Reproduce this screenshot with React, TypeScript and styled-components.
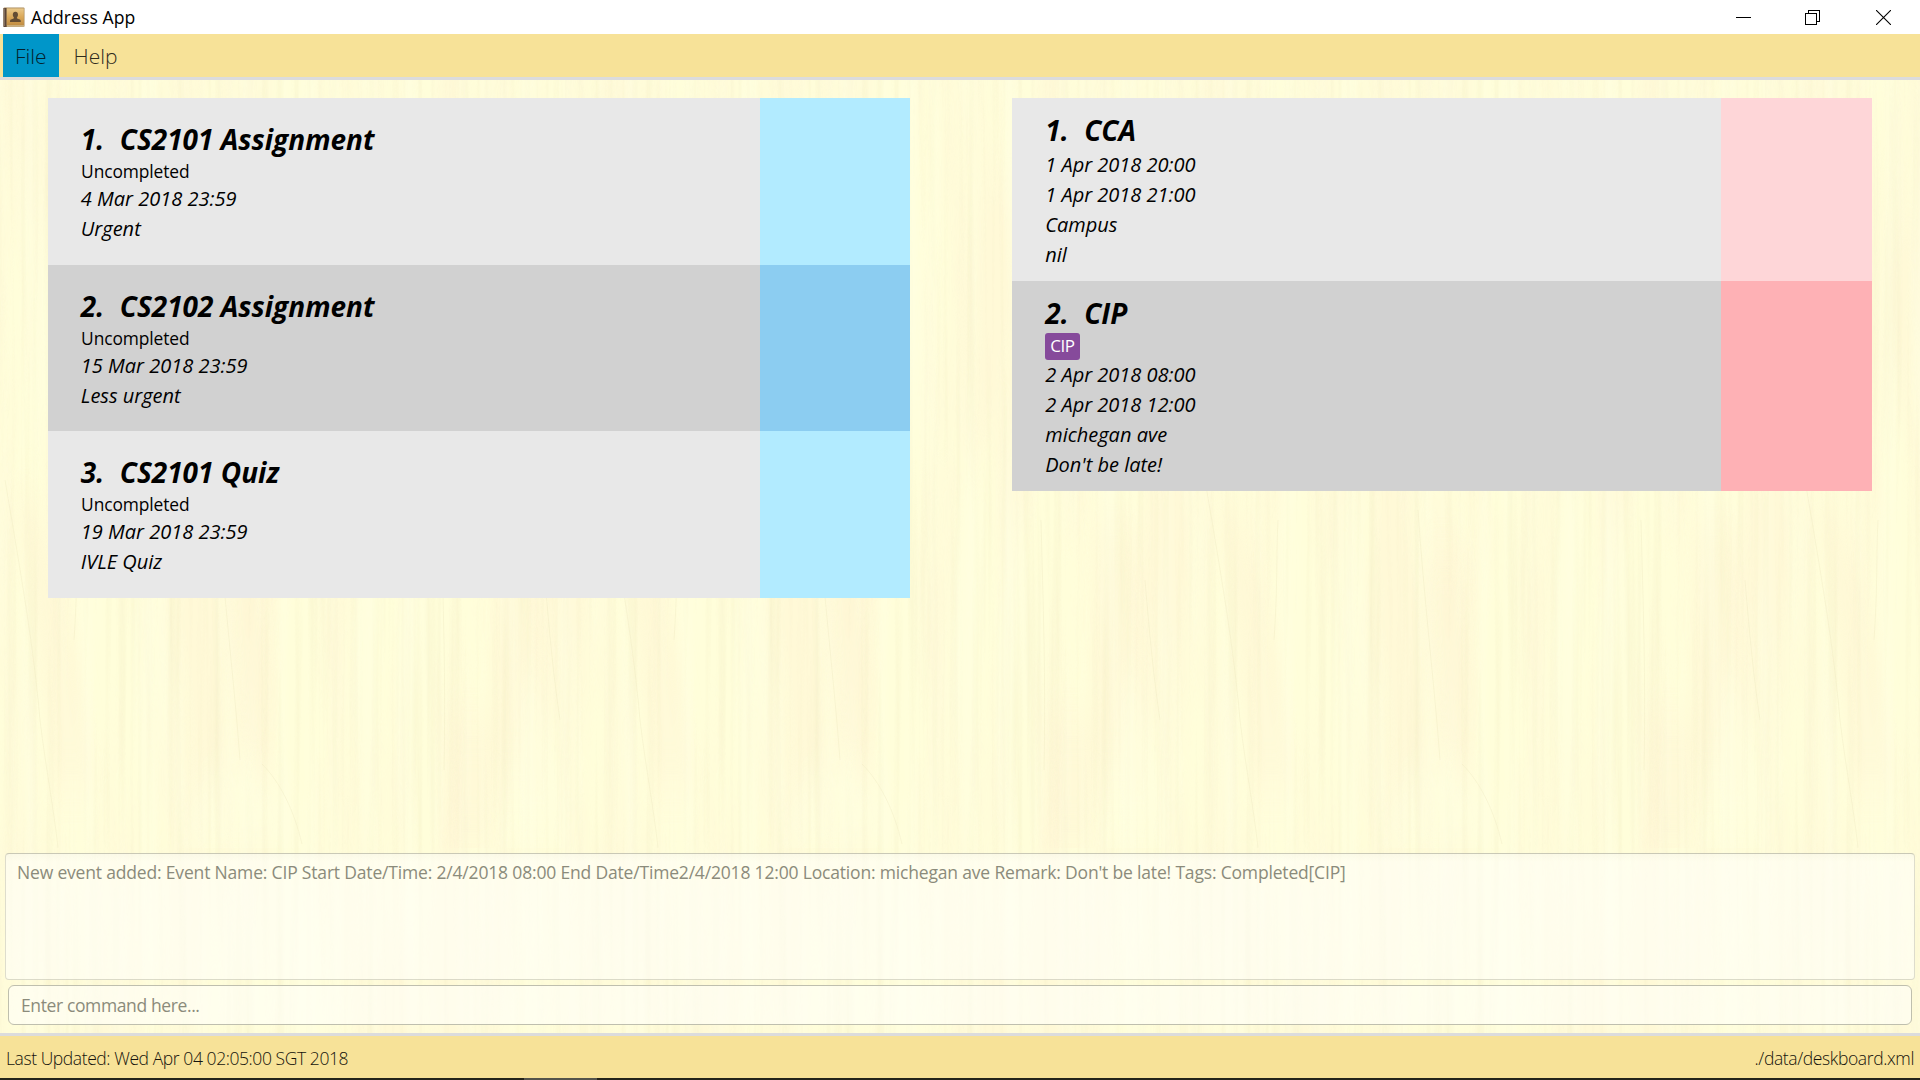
import React from "react";
import styled, { createGlobalStyle } from "styled-components";

const GlobalStyle = createGlobalStyle`
  * { box-sizing: border-box; }
  body {
    margin: 0;
    background: #fffddb;
    font-family: "Open Sans", "Noto Sans", sans-serif;
    color: #000;
  }
`;

const Window = styled.div`
  display: flex;
  flex-direction: column;
  width: 1920px;
  height: 1080px;
  overflow: hidden;
`;

const TitleBar = styled.header`
  display: flex;
  flex: 0 0 34px;
  align-items: center;
  padding-left: 3px;
  background: #fff;
`;

const WindowTitle = styled.h1`
  flex: 1;
  margin: 0 0 0 6px;
  font-size: 17.6px;
  font-weight: 400;
  line-height: 34px;
  letter-spacing: 0.05px;
`;

const WindowButtons = styled.div`
  display: flex;
  align-self: stretch;
`;

const WindowButton = styled.button<{ $width: number }>`
  display: flex;
  align-items: center;
  justify-content: center;
  width: ${(p) => p.$width}px;
  padding: 0;
  border: 0;
  background: none;
`;

const MenuBar = styled.nav`
  display: flex;
  flex: 0 0 46px;
  padding-left: 3px;
  background: #f7e298;
  border-bottom: 3px solid #dcdcdc;
`;

const MenuItem = styled.div<{ $active?: boolean }>`
  height: 43px;
  padding: 0 ${(p) => (p.$active ? "12px 0 12px" : "13px 0 15px")};
  background: ${(p) => (p.$active ? "#0096c9" : "transparent")};
  color: ${(p) => (p.$active ? "#04212d" : "#2f2b1d")};
  font-size: 21px;
  font-weight: 300;
  line-height: 45px;
`;

const Body = styled.main`
  position: relative;
  display: flex;
  flex: 1;
  flex-direction: column;
  padding: 18px 5px 8px;
  isolation: isolate;
`;

const WoodLayer = styled.svg`
  position: absolute;
  inset: 0;
  z-index: -1;
`;

const Boards = styled.div`
  display: flex;
  flex: 1;
  align-items: flex-start;
  justify-content: space-between;
  padding: 0 43px;
`;

const CardList = styled.section<{ $width: number; $height: number }>`
  display: flex;
  flex-direction: column;
  width: ${(p) => p.$width}px;
  height: ${(p) => p.$height}px;
`;

const Card = styled.article<{ $shade: "light" | "dark"; $grow: number }>`
  display: flex;
  flex: ${(p) => p.$grow} 0 0;
  background: ${(p) => (p.$shade === "light" ? "#e8e8e8" : "#d1d1d1")};
`;

const CardBody = styled.div<{ $top: number }>`
  flex: 1;
  padding: ${(p) => p.$top}px 0 0 32.8px;
`;

const CardMark = styled.div<{ $color: string }>`
  width: 150.7px;
  background: ${(p) => p.$color};
`;

const CardTitle = styled.h2`
  display: flex;
  margin: 0;
  font-size: 28px;
  font-style: italic;
  font-weight: 700;
  line-height: 39px;
`;

const CardIndex = styled.span`
  width: 39px;
`;

const CardStatus = styled.div`
  padding-left: 0.3px;
  font-size: 17.4px;
  line-height: 25px;
  letter-spacing: -0.12px;
`;

const CardLine = styled.div`
  font-size: 20px;
  font-style: italic;
  line-height: 30px;
`;

const TagRow = styled.div`
  display: flex;
  height: 27px;
`;

const Tag = styled.span`
  height: 27px;
  padding: 0 5px;
  border-radius: 3px;
  background: #864a9b;
  color: #fff;
  font-size: 17px;
  line-height: 26px;
  letter-spacing: -0.4px;
`;

const ResultPanel = styled.div`
  height: 127px;
  padding: 6px 11px;
  border: 1px solid rgba(120, 120, 100, 0.24);
  border-top-color: rgba(120, 120, 100, 0.4);
  border-radius: 4px;
  background: linear-gradient(rgba(248, 248, 240, 0.6), rgba(255, 255, 250, 0.6) 8px);
  color: #8b8b7b;
  font-size: 17.5px;
  line-height: 24px;
  letter-spacing: -0.177px;
  white-space: nowrap;
`;

const CommandBox = styled.div`
  height: 40px;
  margin: 5px 3px 0;
  padding: 0 12px;
  border: 1px solid #bfbfae;
  border-radius: 6px;
  background: rgba(255, 255, 250, 0.6);
  color: #8b8b7b;
  font-size: 17.5px;
  line-height: 39px;
  letter-spacing: -0.38px;
`;

const StatusBar = styled.footer`
  display: flex;
  flex: 0 0 45px;
  justify-content: space-between;
  min-height: 0;
  padding: 2px 6px 0;
  border-top: 3px solid #dcdcdc;
  background: #f7e298;
  color: #15130c;
  font-size: 17.5px;
  font-weight: 350;
  line-height: 40px;
`;

const StatusText = styled.span<{ $spacing: number }>`
  letter-spacing: ${(p) => p.$spacing}px;
`;

const TaskbarEdge = styled.div`
  display: flex;
  flex: 0 0 2px;
  padding-left: 524px;
  background: #24241a;
`;

const TaskbarActive = styled.div`
  width: 73px;
  background: #54544b;
`;

function AddressBookIcon() {
  return (
    <svg width="22" height="21" viewBox="0 0 22 21">
      <defs>
        <linearGradient id="cover" x1="0" y1="0" x2="0" y2="1">
          <stop offset="0" stopColor="#e9c88a" />
          <stop offset="0.5" stopColor="#dba95a" />
          <stop offset="1" stopColor="#c08c42" />
        </linearGradient>
      </defs>
      <rect x="0.5" y="0.5" width="21" height="19.5" rx="1" fill="#a98a5a" />
      <rect x="0.5" y="1" width="3" height="19" fill="#5b4537" />
      <rect x="1" y="1.5" width="0.8" height="17.5" fill="#8b7768" />
      <rect x="3.8" y="1.4" width="17" height="17" fill="url(#cover)" />
      <path d="M4 19h17" stroke="#efe0bd" strokeWidth="0.8" />
      <path
        d="M12.400 4.800c1.700 0 2.600 1.200 2.600 2.900 0 1.200-.5 2.100-1.100 2.700v.9c.8.7 3.300 1 3.700 1.900.2.500.2 1.200.2 1.900H7c0-.7 0-1.400.2-1.900.4-.9 2.900-1.200 3.700-1.900v-.9c-.6-.6-1.100-1.500-1.100-2.700C9.800 6 10.700 4.800 12.400 4.800z"
        fill="#634c33"
      />
    </svg>
  );
}

function WoodGrain() {
  return (
    <WoodLayer width="1920" height="953" aria-hidden>
      <defs>
        <filter id="bands" x="0" y="0" width="100%" height="100%" colorInterpolationFilters="sRGB">
          <feTurbulence type="fractalNoise" baseFrequency="0.018 0.003" numOctaves={4} seed={7} stitchTiles="stitch" />
          <feColorMatrix values="0 0 0 0 0.995  0 0 0 0 0.945  0 0 0 0 0.825  3 0 0 0 -1.15" />
        </filter>
        <filter id="fibres" x="0" y="0" width="100%" height="100%" colorInterpolationFilters="sRGB">
          <feTurbulence type="fractalNoise" baseFrequency="0.13 0.003" numOctaves={3} seed={21} stitchTiles="stitch" />
          <feColorMatrix values="0 0 0 0 0.93  0 0 0 0 0.9  0 0 0 0 0.73  1.6 0 0 0 -0.74" />
        </filter>
        <filter id="highlights" x="0" y="0" width="100%" height="100%" colorInterpolationFilters="sRGB">
          <feTurbulence type="fractalNoise" baseFrequency="0.05 0.003" numOctaves={2} seed={4} stitchTiles="stitch" />
          <feColorMatrix values="0 0 0 0 1  0 0 0 0 1  0 0 0 0 0.9  0 2.4 0 0 -1.1" />
        </filter>
        <filter id="soft" x="-30%" y="-30%" width="160%" height="160%">
          <feGaussianBlur stdDeviation="6 22" />
        </filter>
        <pattern id="plank" width="600" height="768" patternUnits="userSpaceOnUse">
          <rect width="600" height="768" fill="#fffeda" />
          <rect width="600" height="768" filter="url(#bands)" opacity="0.36" />
          <g fill="#fef3d2" opacity="0.42" filter="url(#soft)">
            <path d="M14 420C32 520 46 600 52 710H96C88 620 72 520 34 420z" />
            <path d="M222 470C228 560 236 610 242 700H268C276 620 272 540 262 470z" />
            <path d="M494 440C488 560 498 640 486 700H540C546 610 540 520 530 440z" />
            <path d="M452 640H492V768H446z" />
          </g>
          <g fill="#ffffe0" opacity="0.6" filter="url(#soft)">
            <path d="M180 768C186 722 205 690 232 686C264 690 292 722 304 768z" />
            <path d="M505 768C510 650 518 600 530 596C542 600 556 650 566 768z" />
          </g>
          <rect width="600" height="768" filter="url(#fibres)" opacity="0.4" />
          <rect width="600" height="768" filter="url(#highlights)" opacity="0.5" />
          <g fill="none" stroke="#ece6be" strokeWidth="1" opacity="0.35">
            <path d="M5 400C22 500 34 570 40 640C46 690 54 730 58 768" />
            <path d="M218 430C224 520 234 600 240 680" />
            <path d="M545 500C550 560 554 600 560 640" />
            <path d="M262 684C280 702 294 730 302 764" />
            <path d="M441 440C443 520 446 600 444 690" />
            <path d="M78 440C76 480 78 500 74 560" />
          </g>
        </pattern>
      </defs>
      <rect width="1920" height="953" fill="url(#plank)" />
    </WoodLayer>
  );
}

interface Entry {
  title: string;
  status?: string;
  tag?: string;
  lines: string[];
  weight: number;
}

const tasks: Entry[] = [
  { title: "CS2101 Assignment", status: "Uncompleted", lines: ["4 Mar 2018 23:59", "Urgent"], weight: 1 },
  { title: "CS2102 Assignment", status: "Uncompleted", lines: ["15 Mar 2018 23:59", "Less urgent"], weight: 1 },
  { title: "CS2101 Quiz", status: "Uncompleted", lines: ["19 Mar 2018 23:59", "IVLE Quiz"], weight: 1 },
];

const events: Entry[] = [
  { title: "CCA", lines: ["1 Apr 2018 20:00", "1 Apr 2018 21:00", "Campus", "nil"], weight: 183 },
  {
    title: "CIP",
    tag: "CIP",
    lines: ["2 Apr 2018 08:00", "2 Apr 2018 12:00", "michegan ave", "Don't be late!"],
    weight: 210,
  },
];

interface BoardProps {
  entries: Entry[];
  width: number;
  height: number;
  top: number;
  marks: [string, string];
}

function Board({ entries, width, height, top, marks }: BoardProps) {
  return (
    <CardList $width={width} $height={height}>
      {entries.map((entry, i) => (
        <Card key={entry.title} $shade={i % 2 === 0 ? "light" : "dark"} $grow={entry.weight}>
          <CardBody $top={top}>
            <CardTitle>
              <CardIndex>{i + 1}.</CardIndex>
              {entry.title}
            </CardTitle>
            {entry.status && <CardStatus>{entry.status}</CardStatus>}
            {entry.tag && (
              <TagRow>
                <Tag>{entry.tag}</Tag>
              </TagRow>
            )}
            {entry.lines.map((line) => (
              <CardLine key={line}>{line}</CardLine>
            ))}
          </CardBody>
          <CardMark $color={marks[i % 2]} />
        </Card>
      ))}
    </CardList>
  );
}

export default function App() {
  return (
    <Window>
      <GlobalStyle />
      <TitleBar>
        <AddressBookIcon />
        <WindowTitle>Address App</WindowTitle>
        <WindowButtons>
          <WindowButton $width={69} aria-label="Minimize">
            <svg width="15" height="15" shapeRendering="crispEdges">
              <rect y="7" width="15" height="1" />
            </svg>
          </WindowButton>
          <WindowButton $width={69} aria-label="Restore">
            <svg width="15" height="15" fill="none" stroke="#000" shapeRendering="crispEdges">
              <path d="M3.500 3V.5H14.500V11.500H12M.5 3.500H11.500V14.500H.5z" />
            </svg>
          </WindowButton>
          <WindowButton $width={73} aria-label="Close">
            <svg width="15" height="15" stroke="#000" strokeWidth="1.1">
              <path d="M0 0L15 15M15 0L0 15" />
            </svg>
          </WindowButton>
        </WindowButtons>
      </TitleBar>
      <MenuBar>
        <MenuItem $active>File</MenuItem>
        <MenuItem>Help</MenuItem>
      </MenuBar>
      <Body>
        <WoodGrain />
        <Boards>
          <Board entries={tasks} width={862.4} height={500} top={22} marks={["#b2ebff", "#8ccdf1"]} />
          <Board entries={events} width={859.6} height={393} top={13} marks={["#fed6d8", "#feb1b5"]} />
        </Boards>
        <ResultPanel>
          New event added: Event Name: CIP Start Date/Time: 2/4/2018 08:00 End Date/Time2/4/2018 12:00 Location:
          michegan ave Remark: Don't be late! Tags: Completed[CIP]
        </ResultPanel>
        <CommandBox>Enter command here...</CommandBox>
      </Body>
      <StatusBar>
        <StatusText $spacing={-0.42}>Last Updated: Wed Apr 04 02:05:00 SGT 2018</StatusText>
        <StatusText $spacing={-0.38}>./data/deskboard.xml</StatusText>
      </StatusBar>
      <TaskbarEdge>
        <TaskbarActive />
      </TaskbarEdge>
    </Window>
  );
}
